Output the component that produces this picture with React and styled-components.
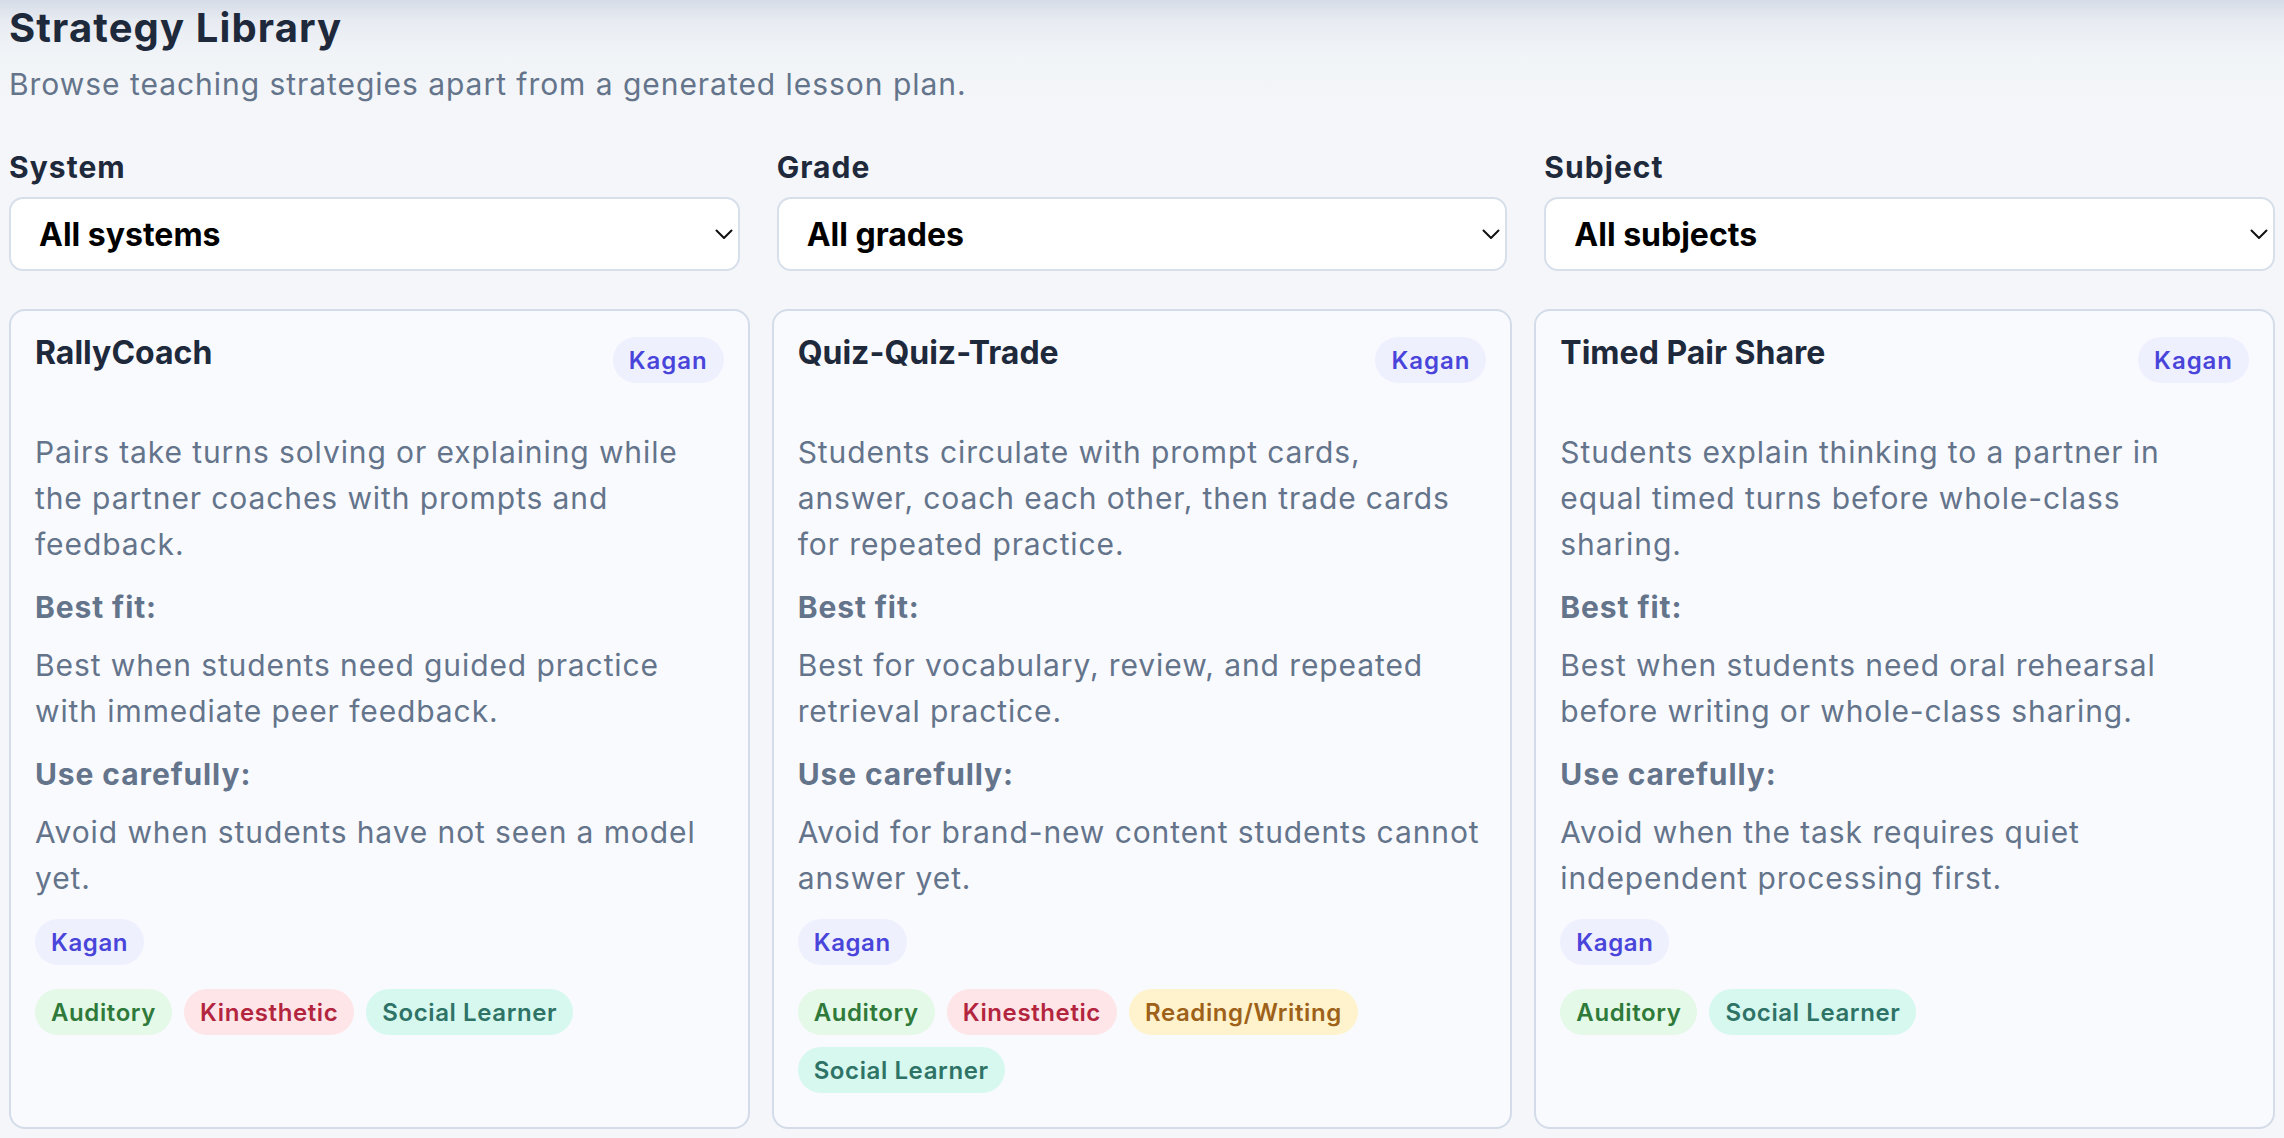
import React from 'react';
import styled, { createGlobalStyle } from 'styled-components';

const GlobalStyle = createGlobalStyle`
  html, body {
    margin: 0;
    padding: 0;
  }
  body {
    background: linear-gradient(to bottom, #d6dce8 0px, #e8ecf2 22px, #f1f4f7 55px, #f4f6f9 110px, #f4f6fa 100%);
    min-height: 100vh;
    font-family: "Inter", "Liberation Sans", sans-serif;
    -webkit-font-smoothing: antialiased;
  }
`

const Page = styled.main`
  padding: 4px 9px 8px;
`

const Title = styled.h1`
  margin: 0;
  font-size: 40px;
  line-height: 48px;
  font-weight: 700;
  letter-spacing: 0.028em;
  color: #1e293b;
`

const Subtitle = styled.p`
  margin: 10px 0 0;
  font-size: 30px;
  line-height: 45px;
  letter-spacing: 0.032em;
  color: #64748b;
`

const Filters = styled.div`
  display: grid;
  grid-template-columns: repeat(3, 1fr);
  gap: 37px;
  margin-top: 42px;
`

const Field = styled.label`
  display: flex;
  flex-direction: column;
  gap: 12px;
`

const FieldLabel = styled.span`
  font-size: 30px;
  line-height: 36px;
  font-weight: 700;
  letter-spacing: 0.035em;
  color: #1e293b;
`

const SelectWrap = styled.div`
  position: relative;
`

const Select = styled.select`
  appearance: none;
  width: 100%;
  height: 74px;
  padding: 0 48px 0 28px;
  border: 2px solid #d7dfea;
  border-radius: 14px;
  background: #ffffff;
  font-family: inherit;
  font-size: 32px;
  font-weight: 700;
  color: #000000;
  outline: none;
`

const Chevron = styled.svg`
  position: absolute;
  right: 7px;
  top: 50%;
  width: 18px;
  height: 11px;
  margin-top: -5px;
  pointer-events: none;
`

const Cards = styled.div`
  display: grid;
  grid-template-columns: repeat(3, 1fr);
  gap: 22px;
  margin-top: 38px;
`

const Card = styled.article`
  display: flex;
  flex-direction: column;
  padding: 22px 24px 34px;
  border: 2px solid #d3dce8;
  border-radius: 16px;
  background: #f9fafe;
`

const CardHeader = styled.div`
  display: flex;
  align-items: flex-start;
  justify-content: space-between;
  gap: 16px;
`

const CardTitle = styled.h2`
  margin: 0;
  font-size: 32px;
  line-height: 40px;
  font-weight: 700;
  color: #1e293b;
`

const Pill = styled.span`
  display: inline-flex;
  align-items: center;
  height: 46px;
  padding: 0 16px;
  border-radius: 23px;
  font-size: 24px;
  font-weight: 600;
  letter-spacing: 0.025em;
  white-space: nowrap;
  background: ${props => props.$bg};
  color: ${props => props.$fg};
`

const HeaderPill = styled(Pill)`
  margin-top: 4px;
  flex-shrink: 0;
  letter-spacing: 0.04em;
`

const Body = styled.p`
  margin: ${props => props.$gap}px 3px 0 0;
  font-size: 30px;
  line-height: 46px;
  letter-spacing: 0.03em;
  color: #64748b;
`

const Heading = styled.h3`
  margin: 17px 0 0;
  font-size: 30px;
  line-height: 46px;
  font-weight: 700;
  letter-spacing: 0.03em;
  color: #64748b;
`

const PillRow = styled.div`
  display: flex;
  flex-wrap: wrap;
  gap: 12px;
  margin-top: ${props => props.$gap}px;
`

const tones = {
  Kagan: { bg: '#eff0fe', fg: '#4a45da' },
  Auditory: { bg: '#e4f9e7', fg: '#2f7a3a' },
  Kinesthetic: { bg: '#fde5e8', fg: '#b3253e' },
  'Reading/Writing': { bg: '#fef3cc', fg: '#9e6119' },
  'Social Learner': { bg: '#d6f8ef', fg: '#2e7366' },
};

const filters = [
  { label: 'System', options: ['All systems', 'Kagan', 'AVID', 'Marzano'] },
  { label: 'Grade', options: ['All grades', 'K-2', '3-5', '6-8', '9-12'] },
  { label: 'Subject', options: ['All subjects', 'ELA', 'Math', 'Science', 'Social Studies'] },
];

const strategies = [
  {
    name: 'RallyCoach',
    system: 'Kagan',
    summary: 'Pairs take turns solving or explaining while the partner coaches with prompts and feedback.',
    bestFit: 'Best when students need guided practice with immediate peer feedback.',
    caution: 'Avoid when students have not seen a model yet.',
    modalities: ['Auditory', 'Kinesthetic', 'Social Learner'],
  },
  {
    name: 'Quiz-Quiz-Trade',
    system: 'Kagan',
    summary: 'Students circulate with prompt cards, answer, coach each other, then trade cards for repeated practice.',
    bestFit: 'Best for vocabulary, review, and repeated retrieval practice.',
    caution: 'Avoid for brand-new content students cannot answer yet.',
    modalities: ['Auditory', 'Kinesthetic', 'Reading/Writing', 'Social Learner'],
  },
  {
    name: 'Timed Pair Share',
    system: 'Kagan',
    summary: 'Students explain thinking to a partner in equal timed turns before whole-class sharing.',
    bestFit: 'Best when students need oral rehearsal before writing or whole-class sharing.',
    caution: 'Avoid when the task requires quiet independent processing first.',
    modalities: ['Auditory', 'Social Learner'],
  },
];

function Tag({ name, header }) {
  const tone = tones[name];
  const Comp = header ? HeaderPill : Pill;
  return <Comp $bg={tone.bg} $fg={tone.fg}>{name}</Comp>;
}

function StrategyCard({ strategy }) {
  return (
    <Card>
      <CardHeader>
        <CardTitle>{strategy.name}</CardTitle>
        <Tag name={strategy.system} header />
      </CardHeader>
      <Body $gap={46}>{strategy.summary}</Body>
      <Heading>Best fit:</Heading>
      <Body $gap={12}>{strategy.bestFit}</Body>
      <Heading>Use carefully:</Heading>
      <Body $gap={12}>{strategy.caution}</Body>
      <PillRow $gap={18}>
        <Tag name={strategy.system} />
      </PillRow>
      <PillRow $gap={24}>
        {strategy.modalities.map(m => <Tag key={m} name={m} />)}
      </PillRow>
    </Card>
  );
}

export default function App() {
  return (
    <>
      <GlobalStyle />
      <Page>
        <Title>Strategy Library</Title>
        <Subtitle>Browse teaching strategies apart from a generated lesson plan.</Subtitle>

        <Filters>
          {filters.map(f => (
            <Field key={f.label}>
              <FieldLabel>{f.label}</FieldLabel>
              <SelectWrap>
                <Select defaultValue={f.options[0]}>
                  {f.options.map(o => <option key={o} value={o}>{o}</option>)}
                </Select>
                <Chevron viewBox="0 0 18 11" fill="none">
                  <polyline points="1.5,1.5 9,9 16.5,1.5" stroke="#111111" strokeWidth="2" strokeLinecap="round" strokeLinejoin="round" />
                </Chevron>
              </SelectWrap>
            </Field>
          ))}
        </Filters>

        <Cards>
          {strategies.map(s => <StrategyCard key={s.name} strategy={s} />)}
        </Cards>
      </Page>
    </>
  );
}
